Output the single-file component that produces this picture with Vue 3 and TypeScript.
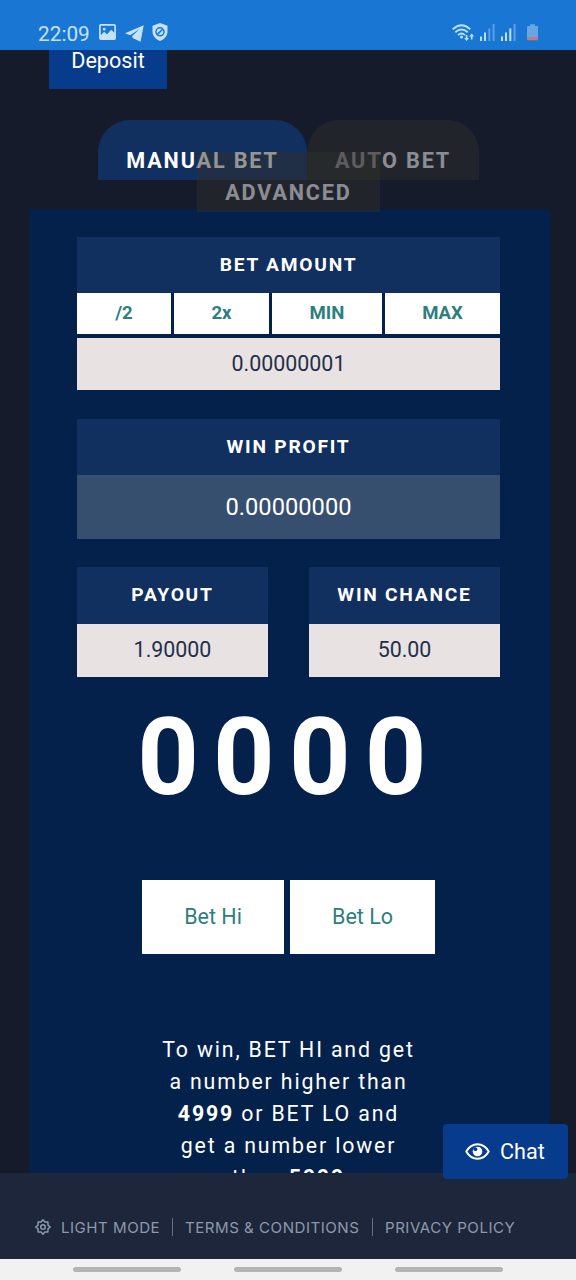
<script setup lang="ts">
interface Tab {
  label: string
  kind: string
}

const tabRows: Tab[][] = [
  [
    { label: 'MANUAL BET', kind: 'active' },
    { label: 'AUTO BET', kind: 'idle' },
  ],
  [{ label: 'ADVANCED', kind: 'idle wrapped' }],
]
const quick: string[] = ['/2', '2x', 'MIN', 'MAX']
const pairs = [
  { title: 'PAYOUT', value: '1.90000' },
  { title: 'WIN CHANCE', value: '50.00' },
]
</script>

<template>
  <div class="screen">
    <header class="status">
      <span class="clock">22:09</span>
      <svg class="ic-photo" width="17" height="16" viewBox="0 0 18 17">
        <path fill-rule="evenodd" fill="#c5e2fb" d="M2 0H16Q18 0 18 2V15Q18 17 16 17H2Q0 17 0 15V2Q0 0 2 0ZM1.8 1.8V12L5.5 8.2L8.5 10.8L13 6.2L16.2 9.3V1.8ZM5.5 4A1.5 1.5 0 1 1 5.5 7A1.5 1.5 0 1 1 5.5 4Z" />
      </svg>
      <svg class="ic-plane" width="19" height="17" viewBox="0 0 19 17">
        <path fill="#c5e2fb" d="M18.7 0.2L0 8.2L5.2 10.2L14.5 4.1L7.2 11.1L7.6 13L15.6 16.8Z" />
      </svg>
      <svg class="ic-shield" width="16" height="18" viewBox="0 0 16 18">
        <path fill="#c5e2fb" d="M8 0L15.5 2.7V8.6C15.5 13 12.3 16.6 8 18C3.7 16.6 .5 13 .5 8.6V2.7Z" />
        <circle cx="8" cy="8.8" r="4" fill="none" stroke="#1976d2" stroke-width="1.5" />
        <path d="M5.4 11.4L10.6 6.2" stroke="#1976d2" stroke-width="1.5" />
      </svg>
      <span class="spacer" />
      <svg class="ic-wifi" width="23" height="18" viewBox="0 0 23 18">
        <g fill="none" stroke="#b9e2fa" stroke-width="1.9">
          <path d="M.7 5.2Q9.5-2.7 18.3 5.2" />
          <path d="M3.3 8.2Q9.5 2.7 15.7 8.2" />
          <path d="M6 11.1Q9.5 8 13 11.1" />
        </g>
        <circle cx="9.5" cy="13" r="1.5" fill="#b9e2fa" />
        <g fill="#b9e2fa">
          <path d="M13.8 11H15.4V14H17.1L14.6 16.9L12.1 14H13.8Z" />
          <path d="M18.9 15.5H20.5V12.4H22.2L19.7 9.5L17.2 12.4H18.9Z" />
        </g>
      </svg>
      <svg class="ic-signal" width="15" height="17" viewBox="0 0 15 17">
        <g fill="#b9e2fa">
          <rect x="0" y="12.5" width="2" height="4.5" />
          <rect x="4" y="8.5" width="2" height="8.5" />
          <rect x="8.3" y="4.5" width="2" height="12.5" opacity=".4" />
          <rect x="12.6" y="0" width="2" height="17" opacity=".4" />
        </g>
      </svg>
      <svg class="ic-signal second" width="15" height="17" viewBox="0 0 15 17">
        <g fill="#b9e2fa">
          <rect x="0" y="12.5" width="2" height="4.5" />
          <rect x="4" y="8.5" width="2" height="8.5" />
          <rect x="8.3" y="4.5" width="2" height="12.5" />
          <rect x="12.6" y="0" width="2" height="17" opacity=".4" />
        </g>
      </svg>
      <svg class="ic-battery" width="11" height="17" viewBox="0 0 12 18">
        <path fill="#68a6e3" d="M3.3 0H8.7V2H11Q12 2 12 3V14.5H0V3Q0 2 1 2H3.3Z" />
        <path fill="#bd7c85" d="M0 14H12V16.5Q12 17.5 11 17.5H1Q0 17.5 0 16.5Z" />
      </svg>
    </header>

    <main class="page">
      <button class="deposit">Deposit</button>

      <nav class="tabs">
        <div v-for="(row, r) in tabRows" :key="r" class="tab-row">
          <span v-for="tab in row" :key="tab.label" class="tab" :class="tab.kind">{{ tab.label }}</span>
        </div>
      </nav>

      <section class="card">
        <div class="title">BET AMOUNT</div>
        <div class="quick">
          <button v-for="q in quick" :key="q">{{ q }}</button>
        </div>
        <div class="field amount">0.00000001</div>

        <div class="title profit-title">WIN PROFIT</div>
        <div class="profit">0.00000000</div>

        <div class="pairs">
          <div v-for="p in pairs" :key="p.title" class="pair">
            <div class="title">{{ p.title }}</div>
            <div class="field">{{ p.value }}</div>
          </div>
        </div>

        <div class="roll">0000</div>

        <div class="bets">
          <button class="hi">Bet Hi</button>
          <button class="lo">Bet Lo</button>
        </div>

        <p class="rules">
          To win, BET HI and get<br />a number higher than<br /><b>4999</b> or BET LO and<br />get a number lower<br />than <b>5000</b>
        </p>
      </section>
    </main>

    <footer class="footer">
      <svg class="ic-gear" width="16" height="16" viewBox="0 0 16 16">
        <g fill="none" stroke="#8d98ad" stroke-linejoin="round">
          <path stroke-width="1.5" d="M8 .8L9.9 3L12.9 2.9L13 6.1L15.2 8L13 9.9L12.9 13.1L9.9 13L8 15.2L6.1 13L3.1 13.1L3 9.9L.8 8L3 6.1L3.1 2.9L6.1 3Z" />
          <circle cx="8" cy="8" r="2.3" stroke-width="1.5" />
        </g>
      </svg>
      <span class="l1">LIGHT MODE</span>
      <i />
      <span class="l2">TERMS &amp; CONDITIONS</span>
      <i />
      <span class="l3">PRIVACY POLICY</span>
    </footer>

    <div class="gesture"><i /><i /><i /></div>

    <button class="chat">
      <svg width="25" height="17" viewBox="0 0 25 17">
        <path d="M1.3 8.5C4 3.7 8 1.2 12.5 1.2S21 3.7 23.7 8.5C21 13.3 17 15.8 12.5 15.8S4 13.3 1.3 8.5Z" fill="none" stroke="#fff" stroke-width="2" stroke-linejoin="round" />
        <circle cx="12.5" cy="8.5" r="4.8" fill="#fff" />
        <circle cx="10.4" cy="6.2" r="1.9" fill="#073b8b" />
      </svg>
      <span>Chat</span>
    </button>
  </div>
</template>

<style scoped>
.screen {
  position: relative;
  display: flex;
  flex-direction: column;
  width: 576px;
  height: 1280px;
  overflow: hidden;
  background: #151b2a;
  color: #fff;
  font-family: Roboto, "Liberation Sans", sans-serif;
}
button {
  margin: 0;
  padding: 0;
  border: 0;
  border-radius: 0;
  font-family: inherit;
  white-space: nowrap;
}
.status {
  flex: none;
  display: flex;
  align-items: flex-start;
  box-sizing: border-box;
  height: 50px;
  padding: 24px 38px 0 38px;
  background: #1976d2;
}
.clock {
  width: 61px;
  margin-top: -2px;
  color: #c5e2fb;
  font-size: 20.8px;
  line-height: 24px;
}
.ic-plane { margin-left: 9px; margin-top: 1px; }
.ic-shield { margin-left: 8px; margin-top: -1px; }
.spacer { flex: 1; }
.ic-signal { margin-left: 5px; }
.ic-signal.second { margin-left: 6px; }
.ic-battery { margin-left: 11px; }
.page {
  flex: none;
  height: 1123px;
  overflow: hidden;
}
.deposit {
  display: block;
  width: 118px;
  height: 39px;
  margin-left: 49px;
  padding-bottom: 18px;
  background: #073b8b;
  color: #fff;
  font-size: 21.6px;
  line-height: 21px;
}
.tabs {
  margin-top: 56px;
  height: 64px;
  text-align: center;
  font-size: 21.6px;
  line-height: 32px;
  font-weight: 700;
  letter-spacing: 1.85px;
}
.tab-row {
  display: flex;
  justify-content: center;
  height: 32px;
  padding-left: 1px;
}
.tab {
  flex: none;
  box-sizing: border-box;
  height: 60px;
  margin-top: -25px;
  padding-top: 25px;
  border-radius: 32px 32px 0 0;
  background: #12305f;
}
.tab.active { width: 209px; }
.tab.idle {
  width: 172px;
  opacity: .5;
  background: #2e2f2c;
}
.tab.idle.wrapped {
  width: 183px;
  border-radius: 0;
}
.card {
  box-sizing: border-box;
  width: 521px;
  height: 1100px;
  margin-left: 29px;
  padding: 28px 50px 0 48px;
  background: #04214b;
}
.title {
  height: 56px;
  background: #12305f;
  text-align: center;
  font-size: 19.2px;
  font-weight: 700;
  line-height: 56px;
  letter-spacing: 1.75px;
}
.quick {
  display: grid;
  grid-template-columns: 94px 95px 110px 115px;
  gap: 3px;
}
.quick button {
  height: 41px;
  padding-bottom: 1px;
  background: #fff;
  color: #2d7f7f;
  font-size: 18.6px;
  font-weight: 700;
}
.field {
  height: 53px;
  background: #e8e2e2;
  color: #232f49;
  text-align: center;
  font-size: 21.4px;
  line-height: 52px;
}
.amount { margin-top: 4px; height: 52px; }
.profit-title { margin-top: 29px; }
.profit {
  height: 64px;
  background: #374f6f;
  text-align: center;
  font-size: 23.7px;
  line-height: 64px;
}
.pairs {
  display: flex;
  justify-content: space-between;
  margin-top: 28px;
}
.pair { width: 191px; }
.pair .title { height: 57px; }
.roll {
  margin-top: 16px;
  height: 127px;
  padding-left: 1px;
  text-align: center;
  font-size: 107.5px;
  line-height: 128px;
  font-weight: 700;
  letter-spacing: 14.2px;
}
.bets {
  display: flex;
  gap: 6px;
  margin-top: 60px;
  margin-left: 65px;
}
.bets button {
  height: 74px;
  padding-bottom: 1px;
  background: #fff;
  color: #2d7f7f;
  font-size: 21.5px;
}
.bets .hi { width: 142px; }
.bets .lo { width: 145px; }
.rules {
  margin: 80px 0 0;
  text-align: center;
  font-size: 21.3px;
  line-height: 32px;
  letter-spacing: 1.85px;
}
.footer {
  flex: none;
  display: flex;
  align-items: center;
  box-sizing: border-box;
  height: 86px;
  padding: 22px 0 0 35px;
  background: #1d263a;
  color: #8d98ad;
  font-family: Inter, Roboto, sans-serif;
  font-size: 15.1px;
  letter-spacing: .5px;
  white-space: nowrap;
}
.footer span { flex: none; }
.footer .l1 { margin-left: 10px; width: 111px; }
.footer .l2 { margin-left: 12px; width: 187px; }
.footer .l3 { margin-left: 12px; }
.footer i { width: 1px; height: 18px; background: #65708a; }
.gesture {
  flex: 1;
  display: flex;
  justify-content: center;
  align-items: center;
  gap: 53px;
  background: #f1f1f1;
}
.gesture i {
  width: 108px;
  height: 5px;
  border-radius: 3px;
  background: #b4b4b4;
}
.chat {
  position: absolute;
  left: 443px;
  top: 1124px;
  display: flex;
  align-items: center;
  width: 125px;
  height: 55px;
  padding-left: 22px;
  padding-bottom: 1px;
  border-radius: 4px;
  background: #073b8b;
  color: #fff;
  font-size: 21.6px;
}
.chat span { margin-left: 10px; }
</style>

<style>
body { margin: 0; background: #151b2a; }
</style>
